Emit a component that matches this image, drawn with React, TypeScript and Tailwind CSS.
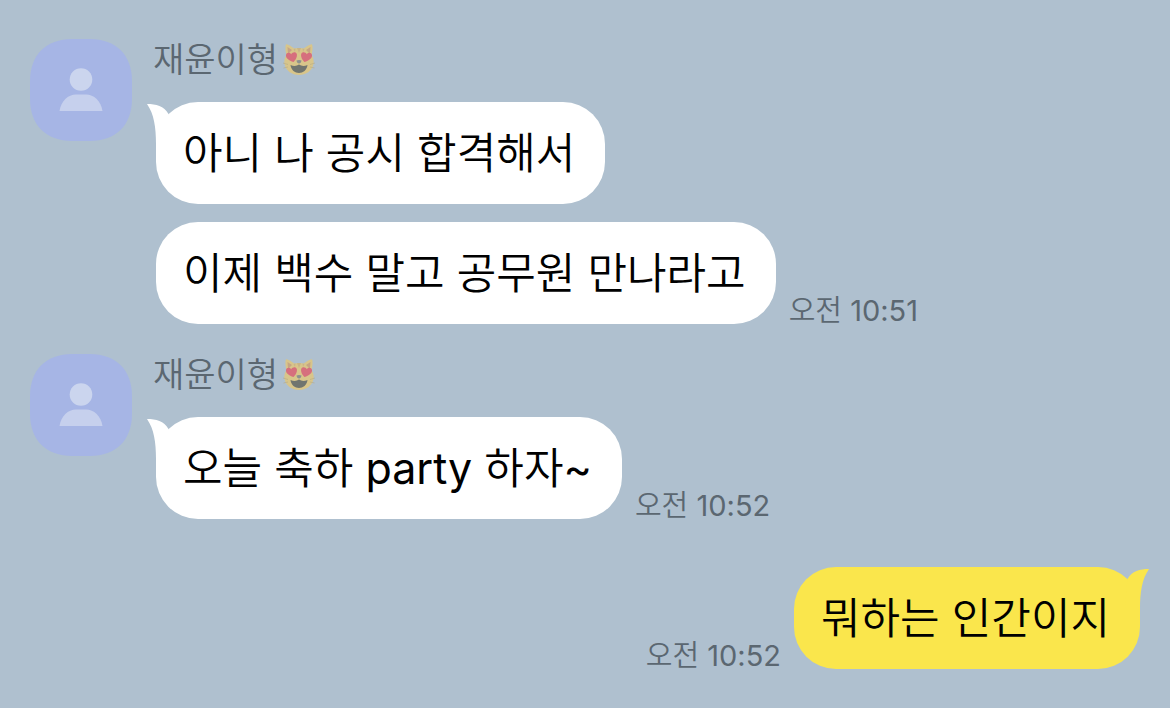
type Bubble = { text: string; time?: string }
type Group = { mine?: boolean; bubbles: Bubble[] }

const groups: Group[] = [
  {
    bubbles: [
      { text: "아니 나 공시 합격해서" },
      { text: "이제 백수 말고 공무원 만나라고", time: "오전 10:51" },
    ],
  },
  { bubbles: [{ text: "오늘 축하 party 하자~", time: "오전 10:52" }] },
  { mine: true, bubbles: [{ text: "뭐하는 인간이지", time: "오전 10:52" }] },
]

function Avatar() {
  return (
    <svg viewBox="0 0 102 102" className="size-[102px] shrink-0" aria-hidden="true">
      <path
        d="M42 0H60C86 0 102 16 102 42V60C102 86 86 102 60 102H42C16 102 0 86 0 60V42C0 16 16 0 42 0Z"
        fill="#a6b5e5"
      />
      <circle cx="51" cy="40.5" r="11.3" fill="#cbd5ee" />
      <path d="M29.500 72C31 62 38 55.500 46 55.500H56C64 55.500 71 62 72.500 72Z" fill="#c6d0ed" />
    </svg>
  )
}

function HeartEyesCat() {
  return (
    <svg viewBox="0 0 34 34" className="size-[34px]" role="img" aria-label="하트 눈 고양이">
      <path
        d="M4 1.500C5 .5 10 4 12 5.500C15 4.700 19 4.700 22 5.500C24 4 29 .5 30 1.500C31 3 30.500 9 29.500 12C31.500 15 32 18 31.500 21C30 28 24 32 17 32S4 28 2.500 21C2 18 2.500 15 4.500 12C3.500 9 3 3 4 1.500Z"
        fill="#d8c58a"
      />
      <path d="M5.500 4L10 7L6 11ZM28.500 4L24 7L28 11Z" fill="#c6a583" />
      <path d="M15 5L17 10L19 5ZM11.500 6L13 9L13.500 5.500ZM22.500 6L21 9L20.500 5.500Z" fill="#c9b487" />
      <path
        d="M11.500 19C7 17.500 3.500 15 4 12C4.500 9.500 7.500 9 9.200 11.200C10.500 8.800 14 8.500 14.800 11C15.500 14 13.500 17 11.500 19Z"
        fill="#d66f7d"
      />
      <path
        d="M22.500 19C27 17.500 30.500 15 30 12C29.500 9.500 26.500 9 24.800 11.200C23.500 8.800 20 8.500 19.200 11C18.500 14 20.500 17 22.500 19Z"
        fill="#d66f7d"
      />
      <path d="M14.500 17.500Q17 16.500 19.500 17.500Q19 20.500 17 20.500T14.500 17.500Z" fill="#8c918f" />
      <path
        d="M8.500 22Q13.500 24 17 21.500Q20.500 24 25.500 22C25 27 21 30 17 30S9 27 8.500 22Z"
        fill="#70756f"
      />
      <path d="M1 20L6 21.500M1.500 25L6 24M33 20L28 21.500M32.500 25L28 24" stroke="#b9ae88" strokeWidth=".7" />
    </svg>
  )
}

function Tail({ mine }: { mine?: boolean }) {
  return (
    <svg
      viewBox="0 0 24 42"
      aria-hidden="true"
      className={
        mine
          ? "absolute top-0 -right-[9px] h-[42px] w-6 -scale-x-100 text-[#fae64c]"
          : "absolute top-0 -left-[9px] h-[42px] w-6 text-white"
      }
    >
      <path d="M0 2C9 2 17 4 21.500 12L24 42H9C9 25 7 12 0 2Z" fill="currentColor" />
    </svg>
  )
}

function Message({ text, time, mine, tail }: Bubble & { mine?: boolean; tail: boolean }) {
  return (
    <div className={mine ? "flex flex-row-reverse items-end gap-[13px]" : "flex items-end gap-[13px]"}>
      <p
        className={
          mine
            ? "relative rounded-[42px] bg-[#fae64c] py-5 pr-[30px] pl-[27px] text-[43px] leading-[62px]"
            : "relative rounded-[42px] bg-white py-5 pr-[30px] pl-[27px] text-[43px] leading-[62px]"
        }
      >
        {tail && <Tail mine={mine} />}
        {text}
      </p>
      {time && (
        <time className="shrink-0 text-[29px] leading-[26px] text-[#5b6771]">{time}</time>
      )}
    </div>
  )
}

export default function App() {
  return (
    <main className="min-h-screen bg-[#afc0cf] px-[30px] py-[39px] font-['Inter','Noto_Sans_CJK_KR_DemiLight','Noto_Sans_CJK_KR',sans-serif] text-black">
      {groups.map((group, i) =>
        group.mine ? (
          <section key={i} className="mt-12 flex flex-col items-end gap-[18px]">
            {group.bubbles.map((bubble, j) => (
              <Message key={j} {...bubble} mine tail={j === 0} />
            ))}
          </section>
        ) : (
          <section key={i} className={i > 0 ? "mt-[30px] flex gap-6" : "flex gap-6"}>
            <Avatar />
            <div className="flex flex-col">
              <h2 className="-ml-[3px] flex h-[42px] items-center gap-1 text-[34px] leading-[42px] text-[#5b6771]">
                재윤이형
                <HeartEyesCat />
              </h2>
              <div className="mt-[21px] flex flex-col gap-[18px]">
                {group.bubbles.map((bubble, j) => (
                  <Message key={j} {...bubble} tail={j === 0} />
                ))}
              </div>
            </div>
          </section>
        ),
      )}
    </main>
  )
}
